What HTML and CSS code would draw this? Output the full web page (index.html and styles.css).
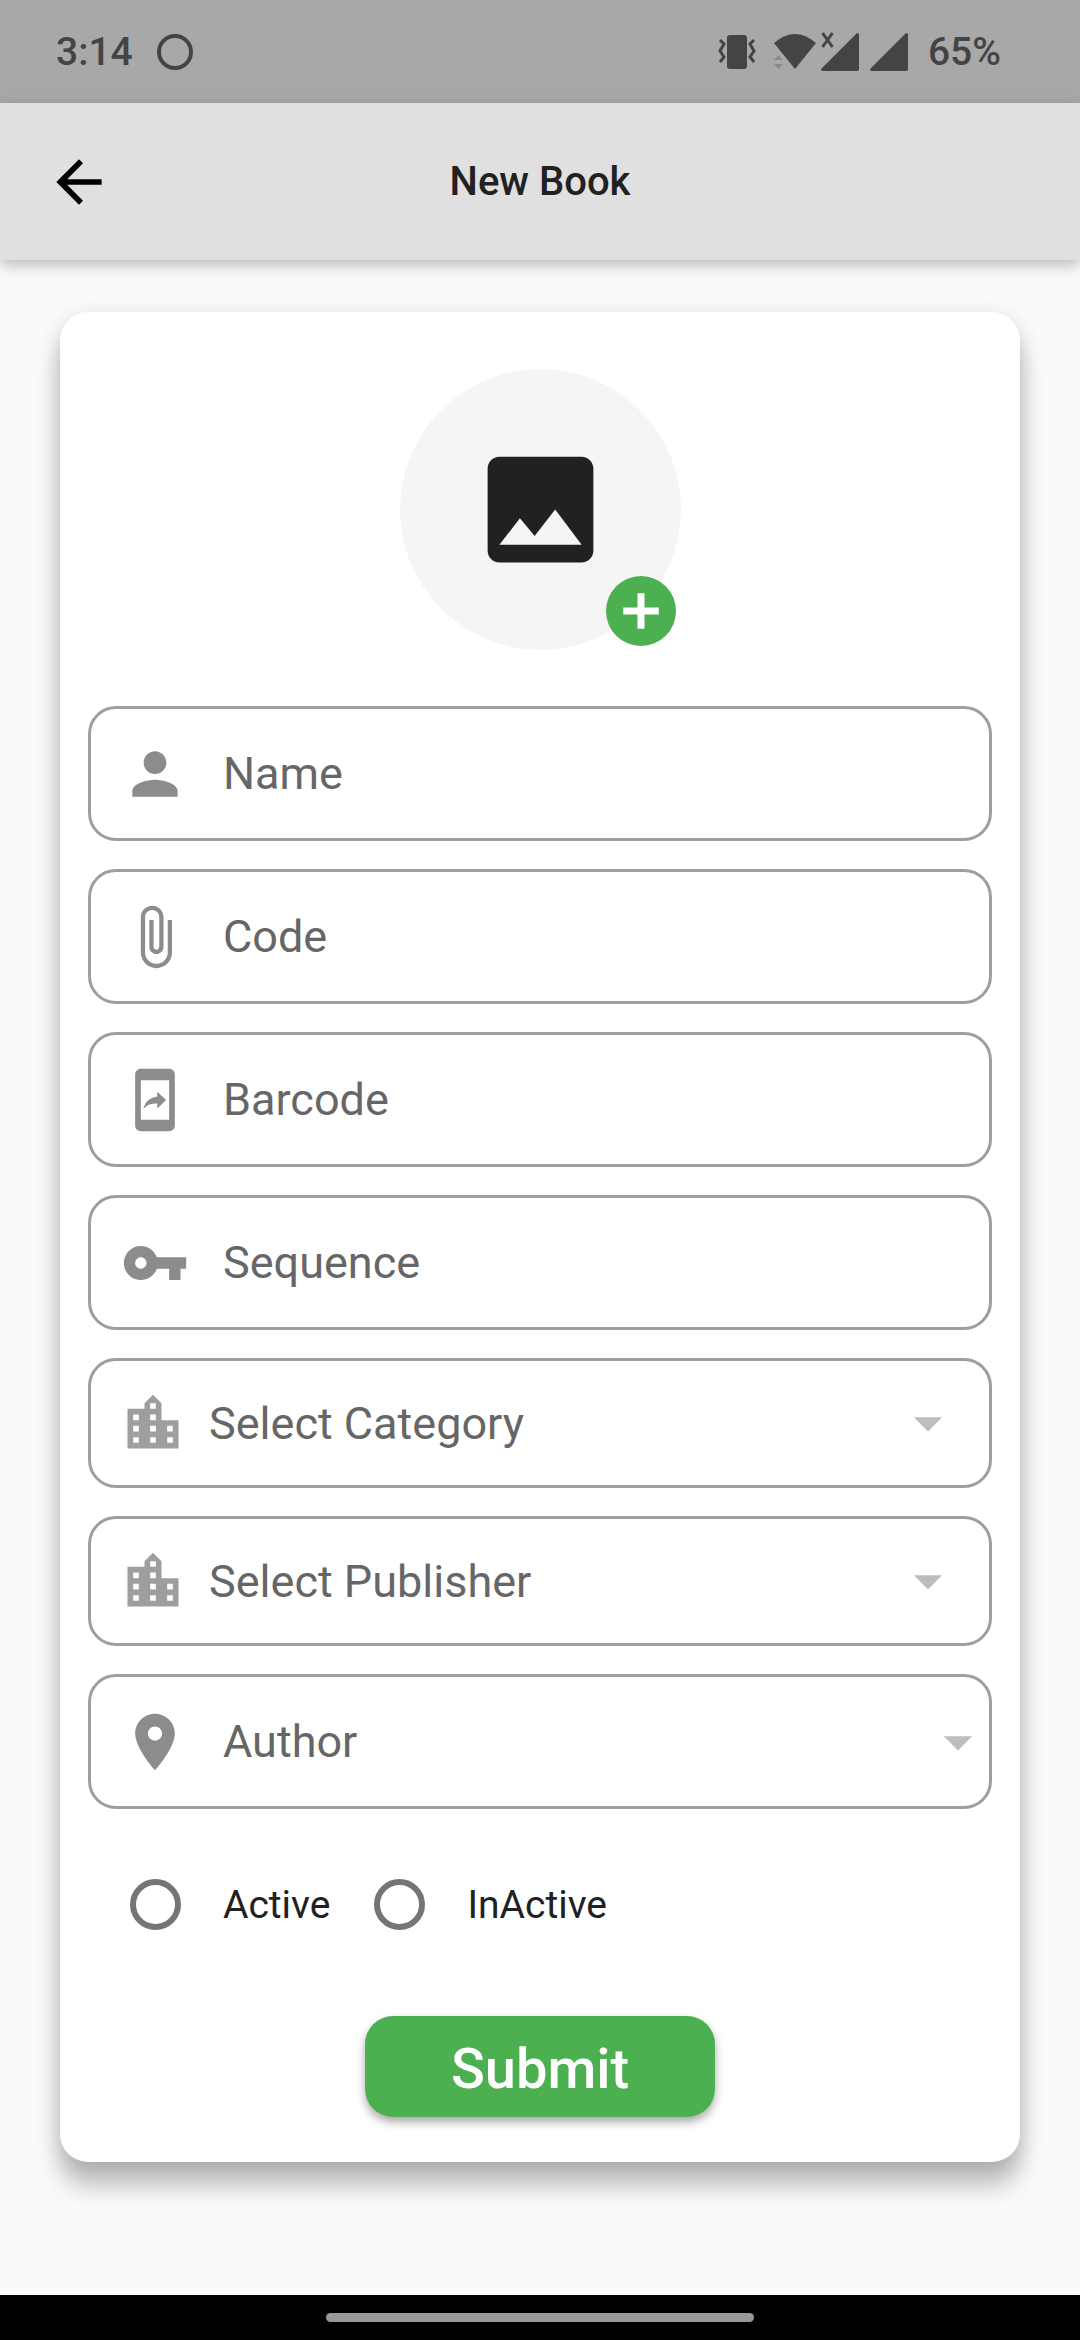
FILE: index.html
```html
<!DOCTYPE html>
<html lang="en">
<head>
  <meta charset="utf-8">
  <meta name="viewport" content="width=device-width, initial-scale=1">
  <title>New Book</title>
  <link rel="stylesheet" href="styles.css">
</head>
<body>
  <div class="status-bar">
    <span>3:14</span>
    <span class="status-ring"></span>
    <div class="status-icons">
      <svg class="status-vibrate" viewBox="0 0 38 36" aria-hidden="true">
        <rect x="9" y="1" width="20" height="34" rx="3" fill="currentColor"/>
        <path d="M2 6l4 4-4 7 4 6-4 5M36 6l-4 4 4 7-4 6 4 5" fill="none" stroke="currentColor" stroke-width="3"/>
      </svg>
      <svg class="status-wifi" viewBox="0 0 42 38" aria-hidden="true">
        <path d="M0 10Q21-8 42 10L21 36z" fill="currentColor"/>
        <path d="M0 27l4.500-5 4.500 5zM0 31h9l-4.500 5z" fill="#8a8a8a"/>
      </svg>
      <svg class="status-signal" viewBox="0 0 38 38" aria-hidden="true">
        <path d="M1.500 38a1.500 1.500 0 0 1-1-2.500L35.500.500a1.500 1.500 0 0 1 2.500 1V36a2 2 0 0 1-2 2z" fill="currentColor"/>
        <path d="M1.500 0l10 14M11.500 0l-10 14" fill="none" stroke="currentColor" stroke-width="3"/>
      </svg>
      <svg class="status-signal" viewBox="0 0 38 38" aria-hidden="true">
        <path d="M1.500 38a1.500 1.500 0 0 1-1-2.500L35.500.500a1.500 1.500 0 0 1 2.500 1V36a2 2 0 0 1-2 2z" fill="currentColor"/>
      </svg>
    </div>
    <span>65%</span>
  </div>

  <header class="app-bar">
    <button class="back" type="button" aria-label="Back">
      <svg class="icon" viewBox="0 0 24 24"><path d="M20 11H7.830l5.590-5.590L12 4l-8 8 8 8 1.410-1.410L7.830 13H20v-2z"/></svg>
    </button>
    <h1 class="title">New Book</h1>
  </header>

  <main class="page">
    <form class="card">
      <div class="avatar">
        <svg class="avatar-image" viewBox="0 0 24 24" aria-hidden="true"><path d="M21 19V5c0-1.100-.900-2-2-2H5c-1.100 0-2 .900-2 2v14c0 1.100.900 2 2 2h14c1.100 0 2-.900 2-2zM8.500 13.500l2.500 3.010L14.500 12l4.500 6H5l3.500-4.500z"/></svg>
        <button class="add" type="button" aria-label="Add picture">
          <svg class="add-icon" viewBox="0 0 24 24"><path d="M19.100 13.400h-5.700v5.700h-2.800v-5.700H4.900v-2.800h5.700V4.900h2.800v5.700h5.700z"/></svg>
        </button>
      </div>

      <div class="fields">
        <label class="field">
          <svg class="icon" viewBox="0 0 24 24" aria-hidden="true"><path d="M12 12c2.210 0 4-1.790 4-4s-1.790-4-4-4-4 1.790-4 4 1.790 4 4 4zm0 2c-2.670 0-8 1.340-8 4v2h16v-2c0-2.660-5.330-4-8-4z"/></svg>
          <input class="control" type="text" name="name" placeholder="Name" aria-label="Name">
        </label>
        <label class="field">
          <svg class="icon" viewBox="0 0 24 24" aria-hidden="true"><path d="M16.500 6v11.500c0 2.210-1.790 4-4 4s-4-1.790-4-4V5c0-1.380 1.120-2.500 2.500-2.500s2.500 1.120 2.500 2.500v10.500c0 .550-.450 1-1 1s-1-.450-1-1V6H10v9.500c0 1.380 1.120 2.500 2.500 2.500s2.500-1.120 2.500-2.500V5c0-2.210-1.790-4-4-4S7 2.790 7 5v12.500c0 3.040 2.460 5.500 5.500 5.500s5.500-2.460 5.500-5.500V6h-1.500z"/></svg>
          <input class="control" type="text" name="code" placeholder="Code" aria-label="Code">
        </label>
        <label class="field">
          <svg class="icon" viewBox="0 0 24 24" aria-hidden="true"><path d="M17 1H7c-1.100 0-2 .900-2 2v18c0 1.100.900 2 2 2h10c1.100 0 2-.900 2-2V3c0-1.100-.900-2-2-2zm0 18H7V5h10v14zM12.800 13.240V15l3.100-3-3.100-2.900v1.700c-3.100.400-4.500 2.400-4.900 4.500 1.100-1.500 2.500-2.060 4.900-2.060z"/></svg>
          <input class="control" type="text" name="barcode" placeholder="Barcode" aria-label="Barcode">
        </label>
        <label class="field">
          <svg class="icon" viewBox="0 0 24 24" aria-hidden="true"><path d="M12.650 10C11.830 7.670 9.610 6 7 6c-3.310 0-6 2.690-6 6s2.690 6 6 6c2.610 0 4.830-1.670 5.650-4H17v4h4v-4h2v-4H12.650zM7 14c-1.100 0-2-.900-2-2s.900-2 2-2 2 .900 2 2-.900 2-2 2z"/></svg>
          <input class="control" type="text" name="sequence" placeholder="Sequence" aria-label="Sequence">
        </label>
        <label class="field field-select">
          <svg class="icon" viewBox="0 0 24 24" aria-hidden="true"><path d="M15 11V5l-3-3-3 3v2H3v14h18V11h-6zm-8 8H5v-2h2v2zm0-4H5v-2h2v2zm0-4H5V9h2v2zm6 8h-2v-2h2v2zm0-4h-2v-2h2v2zm0-4h-2V9h2v2zm0-4h-2V5h2v2zm6 12h-2v-2h2v2zm0-4h-2v-2h2v2z"/></svg>
          <select class="control" name="category" aria-label="Category">
            <option>Select Category</option>
          </select>
          <svg class="caret" viewBox="6 6 12 12" aria-hidden="true"><path d="M7 10l5 5 5-5z"/></svg>
        </label>
        <label class="field field-select">
          <svg class="icon" viewBox="0 0 24 24" aria-hidden="true"><path d="M15 11V5l-3-3-3 3v2H3v14h18V11h-6zm-8 8H5v-2h2v2zm0-4H5v-2h2v2zm0-4H5V9h2v2zm6 8h-2v-2h2v2zm0-4h-2v-2h2v2zm0-4h-2V9h2v2zm0-4h-2V5h2v2zm6 12h-2v-2h2v2zm0-4h-2v-2h2v2z"/></svg>
          <select class="control" name="publisher" aria-label="Publisher">
            <option>Select Publisher</option>
          </select>
          <svg class="caret" viewBox="6 6 12 12" aria-hidden="true"><path d="M7 10l5 5 5-5z"/></svg>
        </label>
        <label class="field">
          <svg class="icon" viewBox="0 0 24 24" aria-hidden="true"><path d="M12 2C8.130 2 5 5.130 5 9c0 5.250 7 13 7 13s7-7.750 7-13c0-3.870-3.130-7-7-7zm0 9.500c-1.380 0-2.500-1.120-2.500-2.500s1.120-2.500 2.500-2.500 2.500 1.120 2.500 2.500-1.120 2.500-2.500 2.500z"/></svg>
          <input class="control" type="text" name="author" placeholder="Author" aria-label="Author">
          <svg class="caret" viewBox="6 6 12 12" aria-hidden="true"><path d="M7 10l5 5 5-5z"/></svg>
        </label>

        <div class="choices" role="radiogroup" aria-label="Status">
          <label class="choice"><input class="radio" type="radio" name="status" value="active">Active</label>
          <label class="choice"><input class="radio" type="radio" name="status" value="inactive">InActive</label>
        </div>
      </div>

      <button class="submit" type="submit">Submit</button>
    </form>
  </main>

  <div class="nav-bar"><span class="nav-pill"></span></div>
</body>
</html>
```
FILE: styles.css
```css
* {
  box-sizing: border-box;
}

body {
  display: flex;
  flex-direction: column;
  min-height: 100vh;
  margin: 0;
  background: #fafafa;
  color: #212121;
  font-family: Roboto, "Noto Sans", sans-serif;
  font-size: 39px;
}

button {
  border: 0;
  padding: 0;
  font: inherit;
  cursor: pointer;
}

svg {
  flex: none;
  fill: currentColor;
}

/* System bars */

.status-bar {
  display: flex;
  align-items: center;
  height: 103px;
  padding: 0 79px 0 56px;
  background: #a8a8a8;
  color: #444;
  font-weight: 500;
}

.status-ring {
  width: 36px;
  height: 36px;
  margin-left: 24px;
  border: 4px solid #444;
  border-radius: 50%;
}

.status-icons {
  display: flex;
  align-items: center;
  margin-left: auto;
  margin-right: 20px;
}

.status-vibrate {
  width: 38px;
  height: 36px;
  margin-right: 18px;
}

.status-wifi {
  width: 42px;
  height: 38px;
  margin-right: 5px;
}

.status-signal {
  width: 38px;
  height: 38px;
  overflow: visible;
}

.status-signal + .status-signal {
  margin-left: 11px;
}

.nav-bar {
  display: flex;
  align-items: center;
  justify-content: center;
  height: 45px;
  background: #000;
}

.nav-pill {
  width: 40%;
  max-width: 428px;
  height: 9px;
  border-radius: 5px;
  background: #999;
}

/* App bar */

.app-bar {
  display: grid;
  grid-template-columns: 1fr auto 1fr;
  align-items: center;
  height: 157px;
  padding: 0 45px;
  background: #e0e0e0;
  box-shadow: 0 5px 14px rgba(0, 0, 0, 0.26);
}

.back {
  display: flex;
  justify-self: start;
  background: none;
  color: #000;
}

.title {
  margin: 0;
  font-size: 40px;
  font-weight: 500;
}

.icon {
  width: 68px;
  height: 68px;
}

/* Form card */

.page {
  flex: 1;
  padding: 52px 60px 132px;
}

.card {
  display: flex;
  flex-direction: column;
  align-items: center;
  padding: 57px 28px 45px;
  border-radius: 28px;
  background: #fff;
  box-shadow: 0 24px 24px rgba(0, 0, 0, 0.24), 0 4px 22px rgba(0, 0, 0, 0.12);
}

.avatar {
  position: relative;
  display: flex;
  align-items: center;
  justify-content: center;
  width: 281px;
  height: 281px;
  margin-bottom: 56px;
  border-radius: 50%;
  background: #f5f5f5;
}

.avatar-image {
  width: 141px;
  height: 141px;
}

.add {
  position: absolute;
  right: 5px;
  bottom: 4px;
  display: flex;
  align-items: center;
  justify-content: center;
  width: 70px;
  height: 70px;
  border-radius: 50%;
  background: #4caf50;
  color: #fff;
}

.add-icon {
  width: 60px;
  height: 60px;
}

.fields {
  display: flex;
  flex-direction: column;
  gap: 28px;
  width: 100%;
}

.field {
  display: flex;
  align-items: center;
  gap: 34px;
  height: 135px;
  padding: 0 14px 0 30px;
  border: 3px solid #9e9e9e;
  border-radius: 28px;
  color: #8c8c8c;
}

.field-select {
  gap: 22px;
  height: 130px;
  padding: 0 44px 0 28px;
  color: #9e9e9e;
}

.control {
  flex: 1;
  min-width: 0;
  height: 100%;
  margin: 0;
  padding: 0;
  border: 0;
  outline: 0;
  background: none;
  appearance: none;
  color: #666;
  font: inherit;
  font-size: 45px;
}

.control::placeholder {
  color: #666;
  opacity: 1;
}

.caret {
  width: 34px;
  height: 34px;
  color: #bdbdbd;
  pointer-events: none;
}

.choices {
  display: flex;
  align-items: center;
  gap: 44px;
  height: 135px;
  padding-left: 42px;
}

.choice {
  display: flex;
  align-items: center;
  gap: 42px;
}

.radio {
  width: 51px;
  height: 51px;
  margin: 0;
  border: 6px solid #757575;
  border-radius: 50%;
  appearance: none;
}

.radio:checked {
  border-color: #4caf50;
  background: radial-gradient(#4caf50 45%, transparent 50%);
}

.submit {
  width: 350px;
  height: 101px;
  margin-top: 44px;
  padding-top: 4px;
  border-radius: 28px;
  background: #4caf50;
  box-shadow: 0 5px 10px rgba(0, 0, 0, 0.34);
  color: #fff;
  font-size: 56px;
  font-weight: 500;
}
```
